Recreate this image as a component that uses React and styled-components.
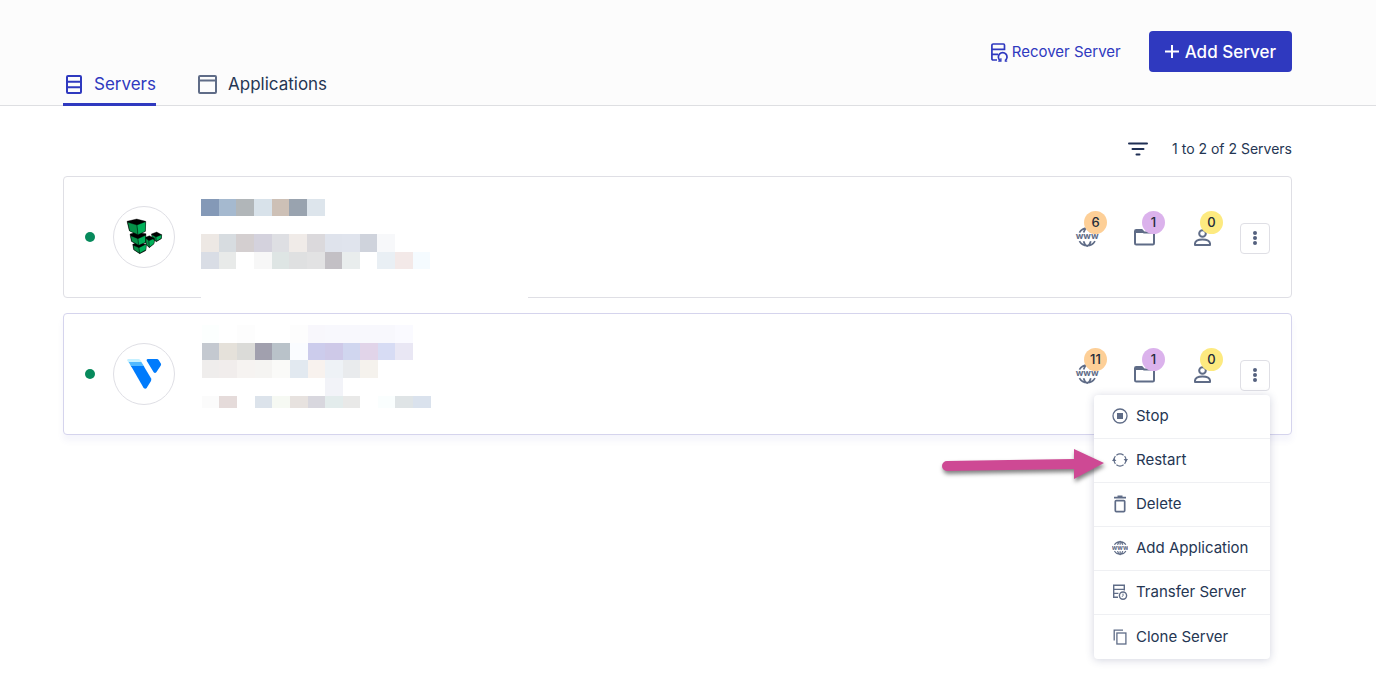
import React from "react";
import styled, { createGlobalStyle } from "styled-components";

const servers = [
  { id: 1, provider: "Linode", apps: 6, projects: 1, members: 0 },
  { id: 2, provider: "Vultr", apps: 11, projects: 1, members: 0 },
];

// column edges and colours of the blurred out server details
const hiddenDetails = {
  1: {
    edges: [0, 18, 35, 53, 71, 88, 106, 124, 141, 159, 176, 194, 212, 229],
    rows: [
      { y: 22, h: 17, colors: ["#8499b7", "#a5b9cf", "#b1b6b9", "#d8e2ea", "#cdc0b6", "#99a3af", "#dde5ec"] },
      { y: 57, h: 18, colors: ["#ede8e4", "#d7dce0", "#d4cfd0", "#d4d2dd", "#dedfe3", "#f0ebe8", "#dbd9dc", "#dfe3ec", "#e0e4ed", "#cfd3dc", "#f7f8fa"] },
      { y: 75, h: 17, colors: ["#d9dde5", "#e8eae9", "", "#f7f7f7", "#dee5e4", "#dfe0e1", "#e2e2e3", "#c3c0c5", "#e9eded", "", "#e9eff4", "#f3e9e8", "#f5fbff"] },
    ],
  },
  2: {
    edges: [1, 18, 36, 54, 71, 89, 107, 124, 142, 159, 177, 194, 212, 230],
    rows: [
      { y: 11, h: 18, colors: ["#fcfffe", "", "#fdfdfd", "", "", "#fdfdfd", "#f8f7fc", "#f8f8fd", "#f8f8fd", "#f8f8fd", "#f8f8fd", "#fafaff"] },
      { y: 29, h: 17, colors: ["#c4c9d0", "#e5e1da", "#dbdbd8", "#a1a0ae", "#b9c2c9", "#fafcff", "#ccccec", "#cec9e8", "#d0d6ef", "#e1d4e9", "#d7dcf4", "#e9e7f4"] },
      { y: 46, h: 18, colors: ["#efedec", "#f1edec", "#f6f3f1", "#f5f4f2", "#fafaf8", "#e2e9f0", "#f8f2ee", "#eef2f6", "#e9ebed", "#f5f2ed"] },
      { y: 64, h: 18, colors: ["", "", "", "", "", "", "", "#f2f3f8"] },
      { y: 82, h: 12, colors: ["#fbfbfb", "#e5dbda", "", "#dce3eb", "#f6f9f3", "#e7e2df", "#d8d7de", "#e3ecec", "#e9e9e8", "", "#fafefe", "#dfe4e6", "#dae2ed"] },
    ],
  },
};

const menuItems = [
  { label: "Stop", icon: <StopIcon /> },
  { label: "Restart", icon: <RestartIcon /> },
  { label: "Delete", icon: <DeleteIcon /> },
  { label: "Add Application", icon: <GlobeIcon size={16} /> },
  { label: "Transfer Server", icon: <TransferIcon /> },
  { label: "Clone Server", icon: <CloneIcon /> },
];

function App() {
  const [openMenu, setOpenMenu] = React.useState(2);

  const onToggleMenu = (id) => {
    setOpenMenu(openMenu === id ? null : id);
  };

  return (
    <Page>
      <GlobalStyle />
      <Header>
        <Tabs>
          <Tab href="#servers" $active>
            <ServersIcon />
            Servers
          </Tab>
          <Tab href="#applications">
            <WindowIcon />
            Applications
          </Tab>
        </Tabs>
        <HeaderActions>
          <RecoverLink href="#recover">
            <RecoverIcon />
            Recover Server
          </RecoverLink>
          <AddButton type="button">
            <PlusIcon />
            Add Server
          </AddButton>
        </HeaderActions>
      </Header>

      <Main>
        <Toolbar>
          <FilterButton type="button" aria-label="Filter servers">
            <FilterIcon />
          </FilterButton>
          <span>1 to 2 of 2 Servers</span>
        </Toolbar>
        <ServerList>
          {servers.map((server) => (
            <ServerCard key={server.id} $raised={openMenu === server.id}>
              <StatusDot />
              <Avatar>
                {server.provider === "Linode" ? <LinodeLogo /> : <VultrLogo />}
              </Avatar>
              <Details>
                <Mosaic {...hiddenDetails[server.id]} />
                {server.id === 1 && <BorderMask />}
              </Details>
              <Actions>
                <Stats>
                  <Stat type="button" aria-label="Applications">
                    <GlobeIcon size={24} />
                    <Badge $color="#fdcf97">{server.apps}</Badge>
                  </Stat>
                  <Stat type="button" aria-label="Projects">
                    <FolderIcon />
                    <Badge $color="#dbb2ec">{server.projects}</Badge>
                  </Stat>
                  <Stat type="button" aria-label="Team members">
                    <PersonIcon />
                    <Badge $color="#fdea80">{server.members}</Badge>
                  </Stat>
                </Stats>
                <MenuAnchor>
                  <KebabButton
                    type="button"
                    aria-label="Server actions"
                    onClick={() => onToggleMenu(server.id)}
                  >
                    <KebabIcon />
                  </KebabButton>
                  {openMenu === server.id && (
                    <Menu>
                      {menuItems.map((item) => (
                        <MenuItem type="button" key={item.label}>
                          {item.icon}
                          {item.label}
                        </MenuItem>
                      ))}
                      <Pointer />
                    </Menu>
                  )}
                </MenuAnchor>
              </Actions>
            </ServerCard>
          ))}
        </ServerList>
      </Main>
    </Page>
  );
}

function Mosaic({ edges, rows }) {
  return (
    <svg width="230" height="120" shapeRendering="crispEdges" aria-hidden="true">
      {rows.map((row) =>
        row.colors.map((color, i) =>
          color ? (
            <rect
              key={row.y + "-" + i}
              x={edges[i]}
              y={row.y}
              width={edges[i + 1] - edges[i]}
              height={row.h}
              fill={color}
            />
          ) : null
        )
      )}
    </svg>
  );
}

function ServersIcon() {
  return (
    <svg width="22" height="22" fill="none" stroke="currentColor" strokeWidth="2">
      <rect x="4" y="3" width="14" height="17" rx="1" />
      <path d="M4 8.7h14M4 14.3h14" />
    </svg>
  );
}

function WindowIcon() {
  return (
    <svg width="22" height="22" fill="none" stroke="#5f6c87" strokeWidth="2">
      <rect x="2" y="3" width="17" height="17" rx="1" />
      <path d="M2 7.5h17" />
    </svg>
  );
}

function RecoverIcon() {
  return (
    <svg width="18" height="20" fill="none" stroke="currentColor" strokeWidth="1.7">
      <path d="M7 18H3.2Q1.9 18 1.9 16.7V3.2Q1.9 2 3.2 2h10.3Q14.5 2 14.5 3.2V7.4H2M2 12.4h6" />
      <path d="M10.4 18.6A4.3 4.3 0 1 1 15 18.6" />
      <path d="M8.2 19.2h2.7v-3M17.2 19.2h-2.5" strokeWidth="1.3" />
    </svg>
  );
}

function PlusIcon() {
  return (
    <svg width="14" height="14" stroke="currentColor" strokeWidth="2">
      <path d="M7 0v13M0 6.5h14" />
    </svg>
  );
}

function FilterIcon() {
  return (
    <svg width="20" height="14" stroke="#1f2f54" strokeWidth="2" strokeLinecap="round">
      <path d="M1 1.5h18M4.5 7h11M8.5 12.5h3" />
    </svg>
  );
}

function GlobeIcon({ size }) {
  const small = size === 16;
  return (
    <svg width={size} height={size} viewBox={small ? "1 0 22 22" : "0 0 24 24"} fill="none" stroke="#5f6c87" strokeWidth="1.7">
      <path d="M4.4 6.6A9 9 0 0 1 20 6.6M8.6 6.6Q9.8 2.7 12.2 1.8Q14.6 2.7 15.8 6.6" />
      <path d="M4.4 15.2A9 9 0 0 0 20 15.2M8.6 15.2Q9.8 19.3 12.2 20.2Q14.6 19.3 15.8 15.2" />
      {small && <path d="M12.2 2v4.4M12.2 15.4V20" />}
      <text x="12.2" y="13.4" textAnchor="middle" fontFamily="Inter, sans-serif" fontSize="9" fontWeight="700" fill="#5f6c87" stroke="none">
        www
      </text>
    </svg>
  );
}

function FolderIcon() {
  return (
    <svg width="24" height="24" fill="none" stroke="#5f6c87" strokeWidth="2">
      <path d="M2 5.2Q2 4 3.2 4H8.7L11 6.5H19.8Q21 6.5 21 7.7V17.3Q21 18.5 19.8 18.5H3.2Q2 18.5 2 17.3Z" />
      <path d="M2 4h7l2.6 3H2z" fill="#5f6c87" stroke="none" />
    </svg>
  );
}

function PersonIcon() {
  return (
    <svg width="24" height="24" fill="none" stroke="#5f6c87" strokeWidth="2">
      <circle cx="11.5" cy="7.5" r="3.3" />
      <path d="M4 19v-1.6Q4.5 13.6 11.5 13.6T19 17.4V19Z" strokeLinejoin="round" />
    </svg>
  );
}

function KebabIcon() {
  return (
    <svg width="6" height="16" fill="#54617f">
      <circle cx="3" cy="3" r="2" />
      <circle cx="3" cy="8" r="2" />
      <circle cx="3" cy="13" r="2" />
    </svg>
  );
}

function StopIcon() {
  return (
    <svg width="16" height="16">
      <circle cx="8" cy="8" r="7" fill="none" stroke="#5f6c87" strokeWidth="1.3" />
      <rect x="5" y="5" width="6" height="6" fill="#5f6c87" />
    </svg>
  );
}

function RestartIcon() {
  return (
    <svg width="16" height="16" fill="none" stroke="#5f6c87" strokeWidth="1.2">
      <path d="M2 8A6 6 0 0 1 3.4 4.2M4.4 3.2A6 6 0 0 1 11.6 3.2M12.6 4.2A6 6 0 0 1 14 8" />
      <path d="M14 8A6 6 0 0 1 12.6 11.8M11.6 12.8A6 6 0 0 1 4.4 12.8M3.4 11.8A6 6 0 0 1 2 8" />
      <path d="M0 9 2 6l2.4 3zM11.6 7 14 10l2-3z" fill="#5f6c87" stroke="none" />
    </svg>
  );
}

function DeleteIcon() {
  return (
    <svg width="16" height="18" fill="none" stroke="#5f6c87" strokeWidth="1.7">
      <path d="M2 2.6h12M5.5 1.3h5" />
      <rect x="3.3" y="5.6" width="9.4" height="11" rx="1" />
    </svg>
  );
}

function TransferIcon() {
  return (
    <svg width="16" height="16" fill="none" stroke="#5f6c87" strokeWidth="1.4">
      <path d="M6 13.3H1.7V1.2h10.6v4.2H1.7M1.7 9.4H6.4M12.3 5v1.6" />
      <circle cx="11" cy="11.6" r="3.6" />
      <path d="M11 9.6v2.2l-1 1" strokeWidth="1" />
    </svg>
  );
}

function CloneIcon() {
  return (
    <svg width="16" height="16" fill="none" stroke="#5f6c87" strokeWidth="1.3">
      <path d="M2.2 11.5V1.2h8.8" />
      <rect x="4.9" y="4" width="9" height="11" />
    </svg>
  );
}

function LinodeLogo() {
  return (
    <svg width="60" height="60" viewBox="162 111 180 180" stroke="#000" strokeWidth="1" strokeLinejoin="round">
      <path d="M218 223 235 216 259 224 257 242 239 251 221 239Z" />
      <path fill="#079048" d="M220 226 237 233 239 250 222 239Z" />
      <path fill="#00b159" d="M237 233 259 222 258 239 239 250Z" />
      <path d="M210 192 228 187 258 191 257 218 235 226 214 214Z" />
      <path fill="#079048" d="M212 197 234 206 236 226 215 214Z" />
      <path fill="#00b159" d="M234 206 257 196 257 217 236 226Z" />
      <path d="M201 154 230 147 257 154 256 184 234 194 208 182Z" />
      <path fill="#079048" d="M203 157 231 165 234 194 209 183Z" />
      <path fill="#00b159" d="M231 165 257 155 256 184 234 194Z" />
      <path d="M257 202 268 197 284 205 282 221 268 233 258 223Z" />
      <path fill="#079048" d="M257 205 267 212 268 232 259 224Z" />
      <path fill="#00b159" d="M267 212 284 205 282 221 268 232Z" />
      <path d="M274 192 290 186 305 194 304 206 289 215 279 207Z" />
      <path fill="#079048" d="M276 194 288 201 289 214 284 211 283 204 276 201Z" />
      <path fill="#00b159" d="M288 201 305 194 304 205 289 214Z" />
    </svg>
  );
}

function VultrLogo() {
  return (
    <svg width="60" height="60" viewBox="162 117 180 180">
      <path fill="#c5f0ff" d="M205 162H235Q239 162 241 165L246 173 207 174 202 167Q200 163 205 162Z" />
      <path fill="#51b9ff" d="M206 171H244L253 185 214 186Z" />
      <path fill="#007bfc" d="M213 183H251L273 220Q275 224 273 228L260 249Q256 254 251 249Z" />
      <path fill="#007bfc" d="M263 162H291Q294 162 296 165L303 176Q304 179 302 182L289 202Q285 206 281 202L260 167Q259 163 263 162Z" />
    </svg>
  );
}

function Pointer() {
  return (
    <PointerSvg width="176" height="52" aria-hidden="true">
      <path
        fill="#ce4994"
        d="M11 16 138 14V4L168 18 138 34V24L11 26A5 5 0 0 1 11 16Z"
      />
    </PointerSvg>
  );
}

const GlobalStyle = createGlobalStyle`
  * {
    box-sizing: border-box;
  }

  body {
    margin: 0;
    background: #fff;
    color: #253653;
    font-family: Inter, "Open Sans", sans-serif;
    font-size: 15px;
    line-height: 20px;
  }

  button {
    font: inherit;
    color: inherit;
    cursor: pointer;
  }

  svg {
    display: block;
    flex-shrink: 0;
  }
`;

const Page = styled.div`
  min-height: 100vh;
`;

const Header = styled.header`
  display: flex;
  justify-content: space-between;
  min-height: 106px;
  padding: 0 84px 0 63px;
  background: #fcfcfc;
  border-bottom: 1px solid #dedfe2;
`;

const Tabs = styled.nav`
  display: flex;
  align-self: flex-end;
  gap: 41px;
  margin-bottom: -1px;
`;

const Tab = styled.a`
  display: flex;
  align-items: center;
  gap: 9px;
  height: 41px;
  border-bottom: 3px solid ${(props) => (props.$active ? "#2f39bf" : "transparent")};
  border-radius: 2px 2px 0 0;
  color: ${(props) => (props.$active ? "#2f39bf" : "#253653")};
  font-size: 17px;
  text-decoration: none;
`;

const HeaderActions = styled.div`
  display: flex;
  align-items: center;
  align-self: flex-start;
  gap: 28px;
  padding-top: 31px;
`;

const RecoverLink = styled.a`
  display: flex;
  align-items: center;
  gap: 4px;
  color: #2f39bf;
  text-decoration: none;
`;

const AddButton = styled.button`
  display: flex;
  align-items: center;
  gap: 6px;
  height: 41px;
  padding: 0 16px;
  background: #2f39bf;
  color: #fff;
  border: 0;
  border-radius: 4px;
  font-size: 17px;
  font-weight: 500;
`;

const Main = styled.main`
  padding: 33px 84px 40px 63px;
`;

const Toolbar = styled.div`
  display: flex;
  align-items: center;
  justify-content: flex-end;
  gap: 24px;
  font-size: 14px;
`;

const FilterButton = styled.button`
  padding: 0;
  border: 0;
  background: none;
`;

const ServerList = styled.div`
  display: flex;
  flex-direction: column;
  gap: 15px;
  margin-top: 17px;
`;

const ServerCard = styled.article`
  display: flex;
  align-items: center;
  min-height: 122px;
  padding: 0 21px;
  background: #fff;
  border: 1px solid ${(props) => (props.$raised ? "#d5d4ed" : "#dfdfe5")};
  border-radius: 4px;
  box-shadow: ${(props) => (props.$raised ? "0 6px 6px rgba(80, 80, 190, 0.06)" : "none")};
`;

const StatusDot = styled.span`
  width: 10px;
  height: 10px;
  border-radius: 50%;
  background: #078a5c;
`;

const Avatar = styled.div`
  width: 62px;
  height: 62px;
  margin-left: 18px;
  border: 1px solid #dfdfe5;
  border-radius: 50%;
`;

const Details = styled.div`
  position: relative;
  flex: 1;
  margin-left: 26px;
`;

const BorderMask = styled.span`
  position: absolute;
  left: 0;
  bottom: -1px;
  width: 327px;
  height: 1px;
  background: #fff;
`;

const Actions = styled.div`
  display: flex;
  align-items: center;
  gap: 25px;
  padding-top: 2px;
`;

const Stats = styled.div`
  display: flex;
  gap: 34px;
`;

const Stat = styled.button`
  position: relative;
  width: 24px;
  height: 24px;
  padding: 0;
  border: 0;
  background: none;
`;

const Badge = styled.span`
  position: absolute;
  top: -15px;
  left: 9px;
  width: 23px;
  height: 23px;
  border-radius: 50%;
  background: ${(props) => props.$color};
  color: #222b3a;
  font-size: 13px;
  font-weight: 500;
  line-height: 23px;
  text-align: center;
`;

const MenuAnchor = styled.div`
  position: relative;
`;

const KebabButton = styled.button`
  display: flex;
  align-items: center;
  justify-content: center;
  width: 30px;
  height: 31px;
  padding: 0;
  background: #fff;
  border: 1px solid #dfdfe5;
  border-radius: 4px;
`;

const Menu = styled.div`
  position: absolute;
  top: calc(100% + 4px);
  right: 0;
  z-index: 2;
  width: 176px;
  background: #fff;
  border-radius: 4px;
  box-shadow: 0 1px 8px rgba(50, 60, 110, 0.22);
`;

const MenuItem = styled.button`
  display: flex;
  align-items: center;
  gap: 8px;
  width: 100%;
  height: 44px;
  padding: 0 0 0 18px;
  background: none;
  border: 0;
  border-bottom: 1px solid #eff0f3;
  text-align: left;
  white-space: nowrap;

  &:last-of-type {
    border-bottom: 0;
  }
`;

const PointerSvg = styled.svg`
  position: absolute;
  top: 50px;
  left: -158px;
  filter: drop-shadow(1px 3px 2px rgba(0, 0, 0, 0.5));
  pointer-events: none;
`;

export default App;
